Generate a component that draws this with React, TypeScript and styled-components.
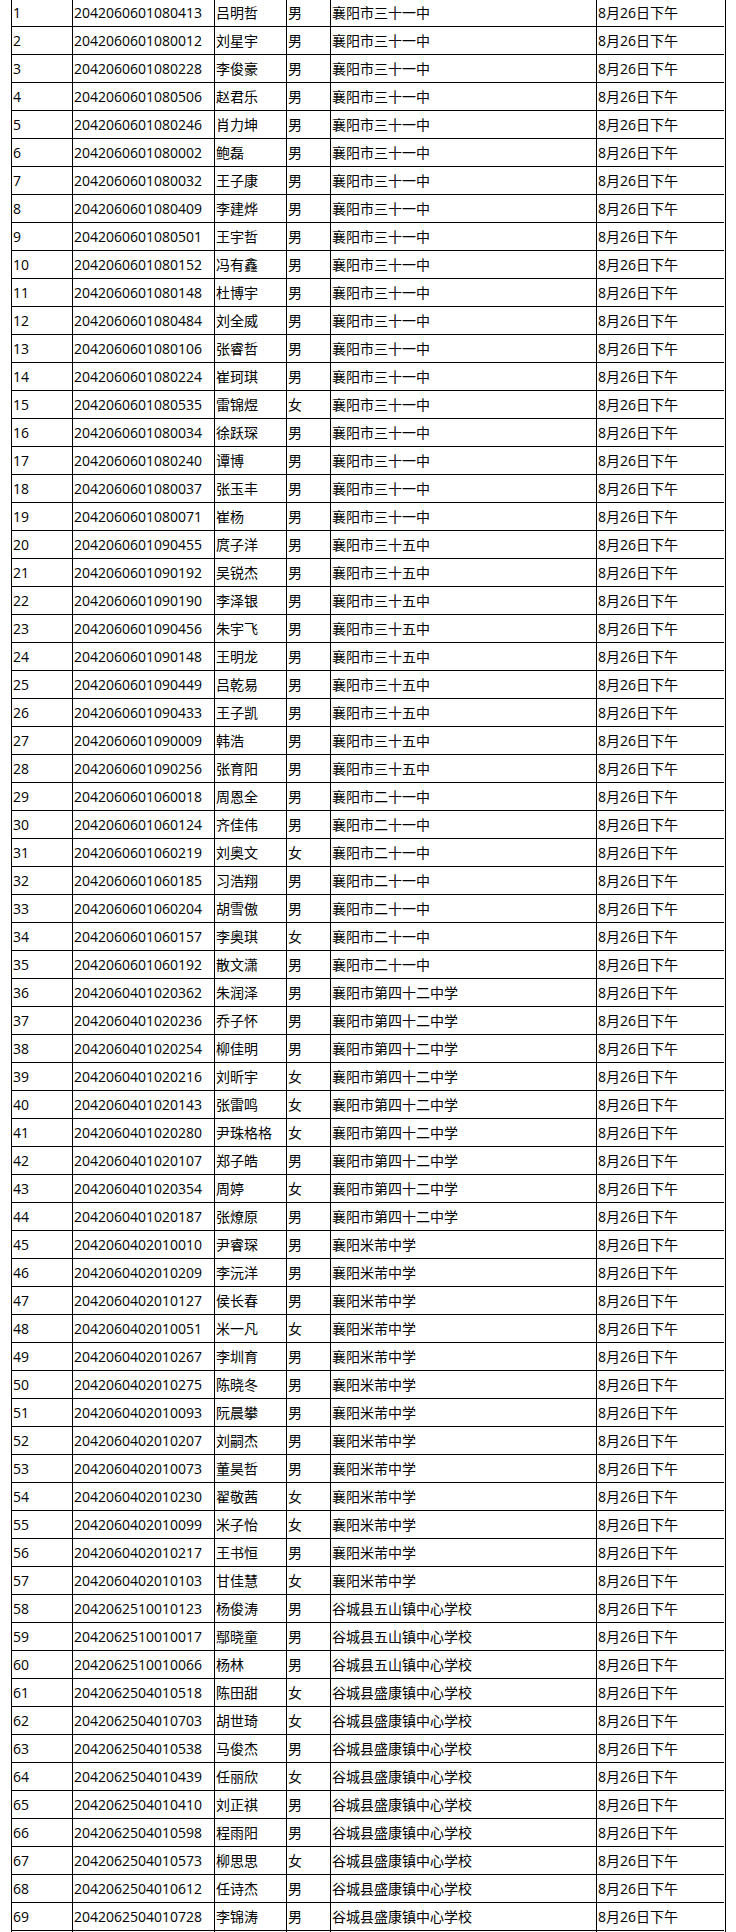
import React from "react";
import styled, { createGlobalStyle } from "styled-components";

const GlobalStyle = createGlobalStyle`
  html, body { margin: 0; padding: 0; background: #fff; }
  body { font-family: "Open Sans", "Noto Sans CJK SC", sans-serif; }
`;

const Page = styled.div`
  padding-left: 11px;
  margin-top: -2px;
  width: 736px;
  box-sizing: border-box;
`;

const Table = styled.div`
  display: flex;
  flex-direction: column;
  width: 714px;
  border-top: 1px solid #000;
  border-right: 1px solid #000;
`;

const Row = styled.div`
  display: grid;
  grid-template-columns: 61px 142px 72px 44px 266px 128px;
  height: 28px;
`;

const Cell = styled.div`
  border-left: 1px solid #000;
  border-bottom: 1px solid #000;
  padding-left: 1px;
  padding-top: 1px;
  line-height: 26px;
  font-size: 14px;
  color: #000;
  white-space: nowrap;
  overflow: hidden;
  font-family: "Open Sans", "Noto Sans CJK SC", sans-serif;
`;

type R = [string, string, string, string];

const S31 = "襄阳市三十一中";
const S35 = "襄阳市三十五中";
const S21 = "襄阳市二十一中";
const S42 = "襄阳市第四十二中学";
const MF = "襄阳米芾中学";
const WS = "谷城县五山镇中心学校";
const SK = "谷城县盛康镇中心学校";

const rows: R[] = [
  ["2042060601080413", "吕明哲", "男", S31],
  ["2042060601080012", "刘星宇", "男", S31],
  ["2042060601080228", "李俊豪", "男", S31],
  ["2042060601080506", "赵君乐", "男", S31],
  ["2042060601080246", "肖力坤", "男", S31],
  ["2042060601080002", "鲍磊", "男", S31],
  ["2042060601080032", "王子康", "男", S31],
  ["2042060601080409", "李建烨", "男", S31],
  ["2042060601080501", "王宇哲", "男", S31],
  ["2042060601080152", "冯有鑫", "男", S31],
  ["2042060601080148", "杜博宇", "男", S31],
  ["2042060601080484", "刘全威", "男", S31],
  ["2042060601080106", "张睿哲", "男", S31],
  ["2042060601080224", "崔珂琪", "男", S31],
  ["2042060601080535", "雷锦煜", "女", S31],
  ["2042060601080034", "徐跃琛", "男", S31],
  ["2042060601080240", "谭博", "男", S31],
  ["2042060601080037", "张玉丰", "男", S31],
  ["2042060601080071", "崔杨", "男", S31],
  ["2042060601090455", "庹子洋", "男", S35],
  ["2042060601090192", "吴锐杰", "男", S35],
  ["2042060601090190", "李泽银", "男", S35],
  ["2042060601090456", "朱宇飞", "男", S35],
  ["2042060601090148", "王明龙", "男", S35],
  ["2042060601090449", "吕乾易", "男", S35],
  ["2042060601090433", "王子凯", "男", S35],
  ["2042060601090009", "韩浩", "男", S35],
  ["2042060601090256", "张育阳", "男", S35],
  ["2042060601060018", "周恩全", "男", S21],
  ["2042060601060124", "齐佳伟", "男", S21],
  ["2042060601060219", "刘奥文", "女", S21],
  ["2042060601060185", "习浩翔", "男", S21],
  ["2042060601060204", "胡雪傲", "男", S21],
  ["2042060601060157", "李奥琪", "女", S21],
  ["2042060601060192", "散文潇", "男", S21],
  ["2042060401020362", "朱润泽", "男", S42],
  ["2042060401020236", "乔子怀", "男", S42],
  ["2042060401020254", "柳佳明", "男", S42],
  ["2042060401020216", "刘昕宇", "女", S42],
  ["2042060401020143", "张雷鸣", "女", S42],
  ["2042060401020280", "尹珠格格", "女", S42],
  ["2042060401020107", "郑子皓", "男", S42],
  ["2042060401020354", "周婷", "女", S42],
  ["2042060401020187", "张燎原", "男", S42],
  ["2042060402010010", "尹睿琛", "男", MF],
  ["2042060402010209", "李沅洋", "男", MF],
  ["2042060402010127", "侯长春", "男", MF],
  ["2042060402010051", "米一凡", "女", MF],
  ["2042060402010267", "李圳育", "男", MF],
  ["2042060402010275", "陈晓冬", "男", MF],
  ["2042060402010093", "阮晨攀", "男", MF],
  ["2042060402010207", "刘嗣杰", "男", MF],
  ["2042060402010073", "董昊哲", "男", MF],
  ["2042060402010230", "翟敬茜", "女", MF],
  ["2042060402010099", "米子怡", "女", MF],
  ["2042060402010217", "王书恒", "男", MF],
  ["2042060402010103", "甘佳慧", "女", MF],
  ["2042062510010123", "杨俊涛", "男", WS],
  ["2042062510010017", "鄢晓童", "男", WS],
  ["2042062510010066", "杨林", "男", WS],
  ["2042062504010518", "陈田甜", "女", SK],
  ["2042062504010703", "胡世琦", "女", SK],
  ["2042062504010538", "马俊杰", "男", SK],
  ["2042062504010439", "任丽欣", "女", SK],
  ["2042062504010410", "刘正祺", "男", SK],
  ["2042062504010598", "程雨阳", "男", SK],
  ["2042062504010573", "柳思思", "女", SK],
  ["2042062504010612", "任诗杰", "男", SK],
  ["2042062504010728", "李锦涛", "男", SK],
];

export default function App() {
  return (
    <>
      <GlobalStyle />
      <Page>
        <Table>
          {rows.map((r, i) => (
            <Row key={i}>
              <Cell>{i + 1}</Cell>
              <Cell>{r[0]}</Cell>
              <Cell>{r[1]}</Cell>
              <Cell>{r[2]}</Cell>
              <Cell>{r[3]}</Cell>
              <Cell>8月26日下午</Cell>
            </Row>
          ))}
          <Row>
            <Cell />
            <Cell />
            <Cell />
            <Cell />
            <Cell />
            <Cell />
          </Row>
        </Table>
      </Page>
    </>
  );
}
